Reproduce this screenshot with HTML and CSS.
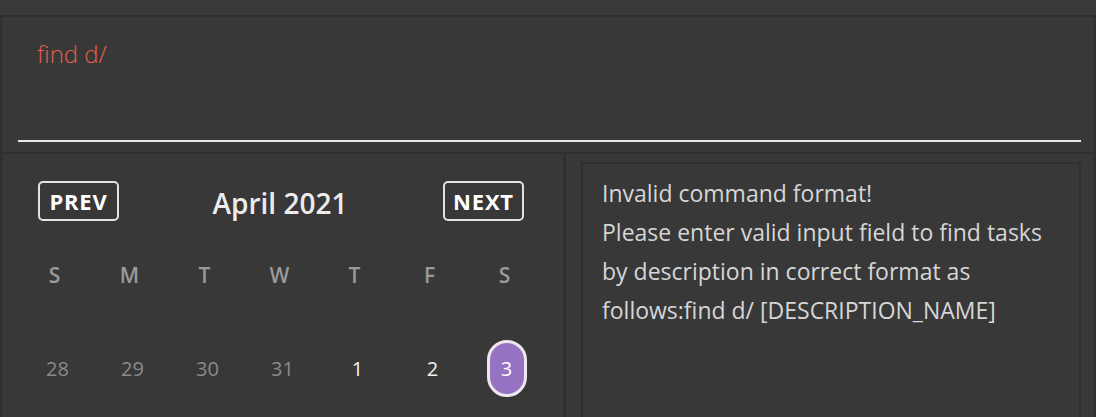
FILE: index.html
```html
<!DOCTYPE html>
<html>
<head>
<meta charset="utf-8">
<link rel="stylesheet" href="styles.css">
</head>
<body>
<div class="app">
  <div class="topbar"></div>
  <div class="command">
    <div class="cmd-input">find d/</div>
  </div>
  <div class="main">
    <div class="calendar">
      <div class="cal-head">
        <div class="nav-btn">PREV</div>
        <div class="month">April 2021</div>
        <div class="nav-btn">NEXT</div>
      </div>
      <div class="grid">
        <div class="wd">S</div><div class="wd">M</div><div class="wd">T</div><div class="wd">W</div><div class="wd">T</div><div class="wd">F</div><div class="wd">S</div>
        <div class="day other">28</div><div class="day other">29</div><div class="day other">30</div><div class="day other">31</div>
        <div class="day">1</div><div class="day">2</div><div class="day"><span class="today">3</span></div>
      </div>
    </div>
    <div class="result">
      <div class="result-box">Invalid command format!<br>Please enter valid input field to find tasks<br>by description in correct format as<br>follows:find d/ [DESCRIPTION_NAME]</div>
    </div>
  </div>
</div>
</body>
</html>
```
FILE: styles.css
```css
html, body {
  margin: 0;
  padding: 0;
  background: #393939;
  overflow: hidden;
}
.app {
  width: 1096px;
  height: 417px;
  display: flex;
  flex-direction: column;
  overflow: hidden;
  font-family: "Open Sans", "Noto Sans", sans-serif;
}
.topbar {
  height: 15px;
  flex: none;
}
.command {
  flex: none;
  border-top: 2px solid #2f2f2f;
  border-left: 2px solid #2f2f2f;
  border-right: 2px solid #2f2f2f;
  background: #383838;
  padding: 21px 13px 0 16px;
  box-sizing: border-box;
  height: 137px;
}
.cmd-input {
  height: 104px;
  border-bottom: 2px solid #e8e8e8;
  padding-left: 19px;
  font-size: 24px;
  font-weight: 300;
  color: #e3614a;
  line-height: 32px;
  box-sizing: border-box;
}
.main {
  flex: 1;
  display: flex;
  border-top: 2px solid #2f2f2f;
  min-height: 0;
  overflow: hidden;
}
.calendar {
  width: 546px;
  flex: none;
  border-left: 2px solid #2f2f2f;
  border-right: 3px solid #2f2f2f;
  background: #383838;
  padding: 27px 0 0 15px;
}
.cal-head {
  width: 486px;
  margin-left: 21px;
  display: flex;
  justify-content: space-between;
  align-items: center;
  height: 40px;
}
.nav-btn {
  width: 81px;
  height: 40px;
  box-sizing: border-box;
  border: 2px solid #e2e2e2;
  border-radius: 5px;
  color: #ffffff;
  font-weight: 700;
  font-size: 22px;
  display: flex;
  align-items: center;
  justify-content: center;
  letter-spacing: 0.8px;
}
.month {
  color: #ececec;
  font-size: 28px;
  font-weight: 600;
  margin-right: 2px;
  margin-top: 4px;
}
.grid {
  display: grid;
  grid-template-columns: repeat(7, 75px);
  grid-template-rows: 36px 60px;
  row-gap: 45px;
  margin-top: 36px;
}
.wd {
  text-align: center;
  color: #9a9a9a;
  font-size: 21px;
  font-weight: 600;
  line-height: 36px;
}
.day {
  display: flex;
  align-items: center;
  justify-content: center;
  padding-left: 6px;
  color: #f2f2f2;
  font-size: 20px;
  font-weight: 500;
}
.day.other {
  color: #8a8a8a;
}
.today {
  width: 40px;
  height: 57px;
  box-sizing: border-box;
  border: 3px solid #ece8ee;
  border-radius: 20px;
  background: #9672c2;
  display: flex;
  align-items: center;
  justify-content: center;
  color: #ffffff;
  margin-left: -2px;
}
.result {
  flex: 1;
  background: #383838;
  padding: 8px 13px 0 15px;
  border-right: 2px solid #2f2f2f;
}
.result-box {
  height: 300px;
  border: 2px solid #2f2f2f;
  background: #383838;
  padding: 10px 0 0 19px;
  color: #d6d6d6;
  font-size: 23px;
  line-height: 39px;
  font-weight: 400;
}
```
